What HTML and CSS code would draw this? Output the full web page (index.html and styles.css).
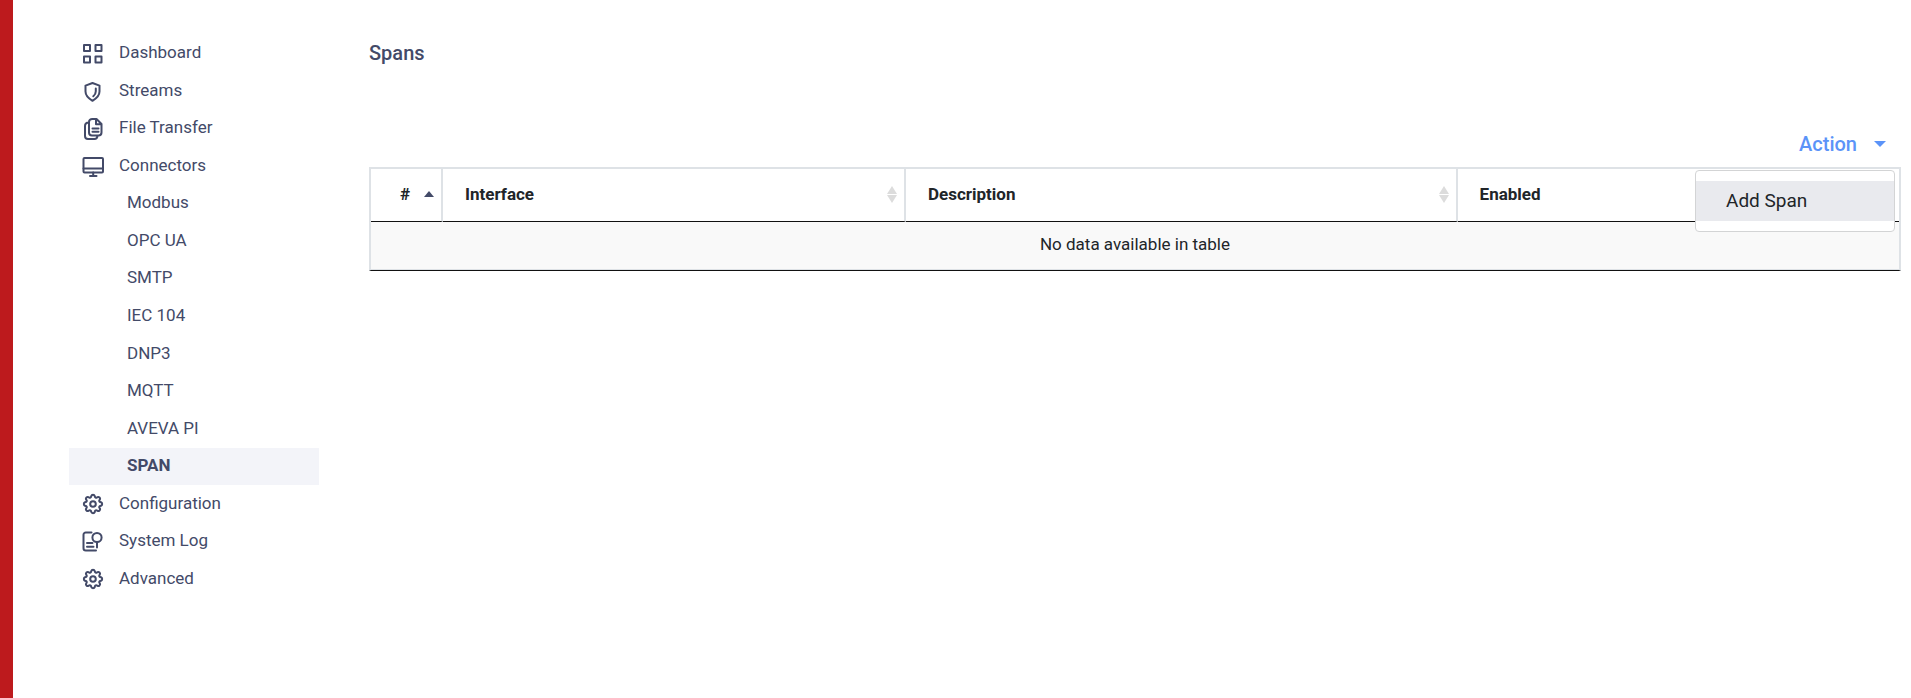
FILE: index.html
```html
<!DOCTYPE html>
<html lang="en">
<head>
<meta charset="utf-8">
<meta name="viewport" content="width=device-width, initial-scale=1">
<title>Spans</title>
<link rel="stylesheet" href="styles.css">
</head>

<body>
<svg class="sprite" width="0" height="0">
  <symbol id="icon-gear" viewBox="0 0 24 24">
    <circle cx="12" cy="12" r="2.8"/>
    <path d="M10.3 3.9c.4-1.4 3-1.4 3.4 0l.3 1c.2.7 1 1.1 1.700.7l.9-.5c1.300-.7 3 1 2.300 2.300l-.5.9c-.4.700 0 1.500.7 1.700l1 .3c1.400.4 1.400 3 0 3.400l-1 .3c-.7.2-1.100 1-.7 1.700l.5.900c.7 1.300-1 3-2.300 2.300l-.9-.5c-.7-.4-1.500 0-1.700.700l-.3 1c-.4 1.400-3 1.400-3.400 0l-.3-1c-.2-.7-1-1.100-1.700-.7l-.9.5c-1.300.7-3-1-2.300-2.300l.5-.9c.4-.7 0-1.500-.7-1.700l-1-.3c-1.400-.4-1.400-3 0-3.400l1-.3c.7-.2 1.100-1 .7-1.700l-.5-.9c-.7-1.300 1-3 2.300-2.300l.9.500c.7.400 1.500 0 1.700-.7z"/>
  </symbol>
</svg>

<div class="page">
  <nav class="sidebar">
    <ul class="menu">
      <li><a href="#" class="menu-item">
        <svg class="icon" viewBox="0 0 24 24"><path d="M3 3h6v6H3zM14.500 3h6v6h-6zM3 14.500h6v6H3zM14.500 14.500h6v6h-6z"/></svg>
        <span>Dashboard</span></a></li>
      <li><a href="#" class="menu-item">
        <svg class="icon" viewBox="0 0 24 24"><path d="M11.500 4l7 2.600v6c0 4.400-3.500 7.200-7 9.200-3.500-2-7-4.800-7-9.200v-6zM14.800 9.500v2.800c0 2-.8 3.600-2.500 5"/></svg>
        <span>Streams</span></a></li>
      <li><a href="#" class="menu-item">
        <svg class="icon" viewBox="0 0 24 24"><path d="M15.500 2h-4.300C9.500 2 8 3.300 8 5v10.500c0 1.700 1.300 3 3 3h6.500c1.700 0 3-1.300 3-3V7zM15 2.300v5h5.300M7.800 5.500C5.500 5.500 4 7 4 9v10c0 1.800 1.300 3 3 3h6.500c1.500 0 2.800-1 3-3M11.500 11.500h6M11.500 14.800h6"/></svg>
        <span>File Transfer</span></a></li>
      <li><a href="#" class="menu-item">
        <svg class="icon" viewBox="0 0 24 24"><rect x="2.500" y="4" width="19.500" height="14.500" rx="1"/><path d="M2.500 14.500H22M12.200 18.500v3.500M9 22h6.500"/></svg>
        <span>Connectors</span></a></li>
      <li><a href="#" class="menu-item sub">Modbus</a></li>
      <li><a href="#" class="menu-item sub">OPC UA</a></li>
      <li><a href="#" class="menu-item sub">SMTP</a></li>
      <li><a href="#" class="menu-item sub">IEC 104</a></li>
      <li><a href="#" class="menu-item sub">DNP3</a></li>
      <li><a href="#" class="menu-item sub">MQTT</a></li>
      <li><a href="#" class="menu-item sub">AVEVA PI</a></li>
      <li><a href="#" class="menu-item sub active">SPAN</a></li>
      <li><a href="#" class="menu-item">
        <svg class="icon"><use href="#icon-gear"/></svg>
        <span>Configuration</span></a></li>
      <li><a href="#" class="menu-item">
        <svg class="icon" viewBox="0 0 24 24"><path d="M10.500 2.500H4.800c-1.300 0-2.300 1-2.300 2.300v13.400c0 1.300 1 2.300 2.300 2.300H15M6 13h5.500M6 16.800h6.500M16 12.500v5"/><circle cx="16" cy="7.500" r="4.600"/></svg>
        <span>System Log</span></a></li>
      <li><a href="#" class="menu-item">
        <svg class="icon"><use href="#icon-gear"/></svg>
        <span>Advanced</span></a></li>
    </ul>
  </nav>

  <main class="content">
    <h1>Spans</h1>
    <div class="toolbar">
      <div class="dropdown">
        <button type="button" class="action" aria-haspopup="true" aria-expanded="true">Action<span class="caret"></span></button>
        <div class="dropdown-menu">
          <button type="button" class="dropdown-item">Add Span</button>
        </div>
      </div>
    </div>

    <table class="table">
      <colgroup>
        <col class="col-id">
        <col class="col-interface">
        <col class="col-description">
        <col>
      </colgroup>
      <thead>
        <tr>
          <th><div class="head center">#<span class="sort-asc"></span></div></th>
          <th><div class="head">Interface<span class="sort"></span></div></th>
          <th><div class="head">Description<span class="sort"></span></div></th>
          <th><div class="head">Enabled<span class="sort"></span></div></th>
        </tr>
      </thead>
      <tbody>
        <tr><td colspan="4">No data available in table</td></tr>
      </tbody>
    </table>
  </main>
</div>
</body>
</html>
```

FILE: styles.css
```css
* { box-sizing: border-box; }
body { margin: 0; background: #fff; color: #212529; font-family: Roboto, "Liberation Sans", sans-serif; font-size: 17px; line-height: 24px; }
button { border: 0; background: none; font: inherit; color: inherit; cursor: pointer; }
.sprite { position: absolute; }

.page { display: flex; min-height: 100vh; border-left: 13px solid #bd1a1d; }

/* sidebar */
.sidebar { flex: none; width: 306px; padding: 35px 0 34px 56px; }
.menu { display: grid; grid-auto-rows: 1fr; height: 563px; margin: 0; padding: 0; list-style: none; }
.menu-item { display: flex; align-items: center; gap: 14px; width: 250px; height: 100%; padding: 0 12px; color: #434a68; text-decoration: none; }
.menu-item span { padding-bottom: 3px; }
.sub { padding: 0 0 3px 58px; }
.active { background: #f3f4f9; font-weight: 700; }
.icon { width: 24px; height: 24px; fill: none; stroke: #434a68; stroke-width: 2; stroke-linecap: round; stroke-linejoin: round; }

/* content */
.content { flex: 1; min-width: 0; padding: 40px 10px 0 50px; }
h1 { margin: 0; color: #434a68; font-size: 20px; font-weight: 500; line-height: 26px; }
.toolbar { display: flex; justify-content: flex-end; padding-top: 61px; }
.dropdown { position: relative; padding: 4px 6px 10px 0; }
.action { display: flex; align-items: center; gap: 17px; padding: 0 9px; color: #5b93f8; font-size: 20px; font-weight: 500; line-height: 26px; }
.caret { border: 6px solid transparent; border-top-color: #5b93f8; border-bottom: 0; }
.dropdown-menu { position: absolute; top: 43px; right: 6px; width: 200px; padding: 10px 0; background: #fff; border: 1px solid #d3d4d5; border-radius: 4px; }
.dropdown-item { display: block; width: 100%; padding: 7px 30px; background: #e9eaee; font-size: 19px; line-height: 26px; text-align: left; }

/* table */
.table { width: 100%; table-layout: fixed; border: 2px solid #dee2e6; border-bottom: 1px solid #111; border-spacing: 0; }
.col-id { width: 72px; }
.col-interface { width: 30.3%; }
.col-description { width: 36.1%; }
th { padding: 13px 7px 15px 22px; border-right: 2px solid #dee2e6; border-bottom: 1px solid #111; font-weight: 700; text-align: left; }
th:last-child { border-right: 0; }
td { padding: 10px 0 13px; background: #f9f9f9; border-bottom: 1px solid #dee2e6; text-align: center; }
.head { display: flex; align-items: center; justify-content: space-between; }
.center { padding-left: 7px; }
.sort-asc { border: 5px solid transparent; border-bottom: 6px solid #434a68; border-top: 0; }
.sort { display: grid; gap: 1px; }
.sort::before, .sort::after { content: ""; border: 5px solid transparent; }
.sort::before { border-bottom: 8px solid #dcdcdc; border-top: 0; }
.sort::after { border-top: 8px solid #dcdcdc; border-bottom: 0; }
```
